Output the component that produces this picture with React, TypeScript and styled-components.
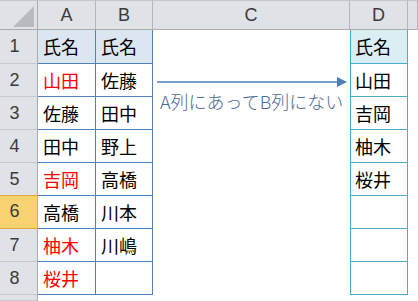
import { createGlobalStyle, styled } from "styled-components";

const GlobalStyle = createGlobalStyle`
  html, body {
    margin: 0;
    padding: 0;
    background: #ffffff;
  }
  body {
    width: 418px;
    height: 301px;
    overflow: hidden;
  }
`;

const Sheet = styled.div`
  position: relative;
  display: grid;
  grid-template-columns: 38px 58px 57px 197px 58px 1fr;
  grid-template-rows: 30px 34px repeat(7, 33px) 1fr;
  width: 418px;
  height: 301px;
  font-family: "Noto Sans CJK JP", sans-serif;
`;

const Corner = styled.div`
  box-sizing: border-box;
  background: #dfe2e6;
  border-right: 1px solid #ababab;
  border-bottom: 1px solid #ababab;
  border-top: 1px solid #c4c6c9;

  svg {
    display: block;
  }
`;

const ColHead = styled.div`
  box-sizing: border-box;
  display: flex;
  align-items: center;
  justify-content: center;
  background: #dfe2e6;
  border-top: 1px solid #c4c6c9;
  border-right: 1px solid #b4b6b9;
  border-bottom: 1px solid #ababab;
  color: #3b3b3b;
  font-family: "Liberation Sans", sans-serif;
  font-size: 18px;
  padding-top: 1px;
`;

const RowHead = styled.div<{ $active?: boolean }>`
  box-sizing: border-box;
  display: flex;
  align-items: center;
  justify-content: center;
  padding-right: 8px;
  background: ${({ $active }) => ($active ? "#f9d271" : "#dfe2e6")};
  border-right: 1px solid ${({ $active }) => ($active ? "#e2a53f" : "#ababab")};
  border-bottom: 1px solid ${({ $active }) => ($active ? "#e2a53f" : "#c6c8cb")};
  box-shadow: ${({ $active }) => ($active ? "inset 0 1px #e2a53f" : "none")};
  margin-top: ${({ $active }) => ($active ? "-1px" : "0")};
  color: #3b3b3b;
  font-family: "Liberation Sans", sans-serif;
  font-size: 18px;
`;

type Kind = "src" | "dst" | "none";

const Cell = styled.div<{ $kind: Kind; $fill?: boolean; $red?: boolean }>`
  box-sizing: border-box;
  display: flex;
  align-items: center;
  padding-left: ${({ $kind }) => ($kind === "dst" ? "4px" : "5px")};
  padding-bottom: 1px;
  font-size: 18px;
  color: ${({ $red }) => ($red ? "#ff0000" : "#000000")};
  background: ${({ $kind, $fill }) =>
    !$fill ? "#ffffff" : $kind === "dst" ? "#daeef3" : "#dce6f1"};
  border-right: ${({ $kind }) =>
    $kind === "src" ? "1px solid #4f81bd" : $kind === "dst" ? "1px solid #4bacc6" : "none"};
  border-bottom: ${({ $kind }) =>
    $kind === "src" ? "1px solid #4f81bd" : $kind === "dst" ? "1px solid #4bacc6" : "none"};
  border-left: ${({ $kind }) => ($kind === "dst" ? "1px solid #4bacc6" : "none")};
  white-space: nowrap;
`;

const Callout = styled.div`
  position: absolute;
  left: 155px;
  top: 76px;
  display: flex;
  flex-direction: column;

  svg {
    display: block;
  }
`;

const CalloutLabel = styled.span`
  margin-top: 4px;
  margin-left: 5px;
  font-size: 18px;
  line-height: 18px;
  font-weight: 300;
  color: #4b6a96;
  white-space: nowrap;
`;

type Name = { text: string; red?: boolean };

const listA: Name[] = [
  { text: "氏名" },
  { text: "山田", red: true },
  { text: "佐藤" },
  { text: "田中" },
  { text: "吉岡", red: true },
  { text: "高橋" },
  { text: "柚木", red: true },
  { text: "桜井", red: true },
];
const listB = ["氏名", "佐藤", "田中", "野上", "高橋", "川本", "川嶋", ""];
const listD = ["氏名", "山田", "吉岡", "柚木", "桜井", "", "", ""];

const columns = ["A", "B", "C", "D", ""];

export default function App() {
  return (
    <>
      <GlobalStyle />
      <Sheet>
        <Corner>
          <svg width="37" height="28" viewBox="0 0 37 28">
            <polygon points="34,5 34,26 13,26" fill="#b7babe" />
          </svg>
        </Corner>
        {columns.map((c, i) => (
          <ColHead key={i}>{c}</ColHead>
        ))}

        {listA.map((a, i) => (
          <Row key={i} n={i + 1} a={a} b={listB[i]} d={listD[i]} />
        ))}

        <RowHead />
        <Cell $kind="none" />
        <Cell $kind="none" />
        <Cell $kind="none" />
        <Cell $kind="none" />
        <Cell $kind="none" />

        <Callout>
          <svg width="194" height="12" viewBox="0 0 194 12">
            <line x1="2" y1="6" x2="184" y2="6" stroke="#4a7ebb" strokeWidth="1.5" />
            <polygon points="182,1 192,6 182,11" fill="#4a7ebb" />
          </svg>
          <CalloutLabel>A列にあってB列にない</CalloutLabel>
        </Callout>
      </Sheet>
    </>
  );
}

function Row({ n, a, b, d }: { n: number; a: Name; b: string; d: string }) {
  const head = n === 1;
  return (
    <>
      <RowHead $active={n === 6}>{n}</RowHead>
      <Cell $kind="src" $fill={head} $red={a.red}>
        {a.text}
      </Cell>
      <Cell $kind="src" $fill={head}>
        {b}
      </Cell>
      <Cell $kind="none" />
      <Cell $kind="dst" $fill={head}>
        {d}
      </Cell>
      <Cell $kind="none" />
    </>
  );
}
